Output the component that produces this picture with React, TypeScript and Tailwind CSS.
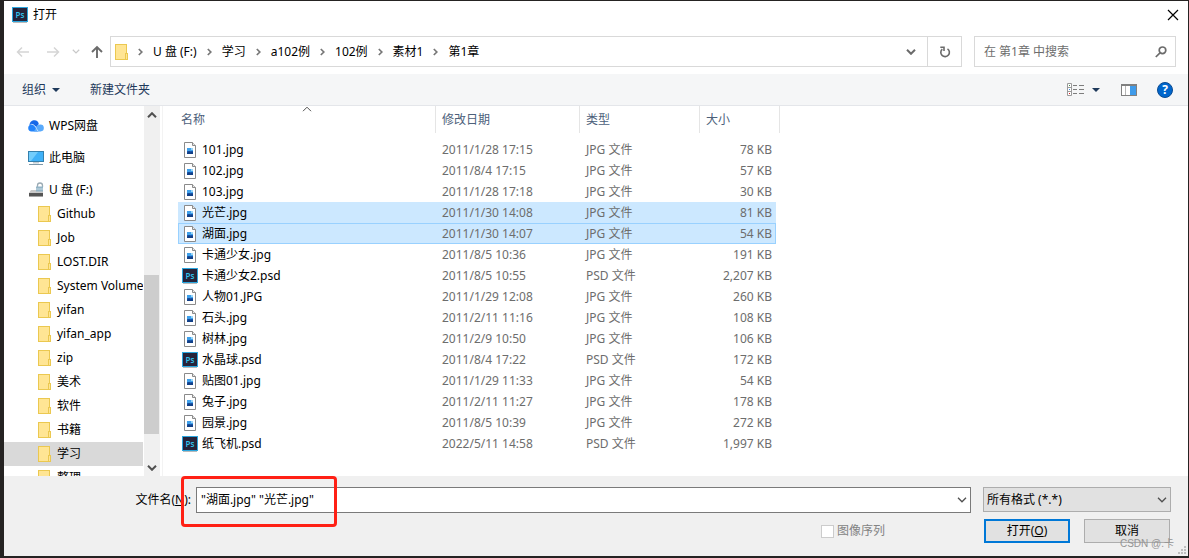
import React, { useState } from 'react';

// one row in the file list
interface FileRow {
  name: string;
  date: string;
  size: string;
}

const files: FileRow[] = [
  { name: '101.jpg', date: '2011/1/28 17:15', size: '78 KB' },
  { name: '102.jpg', date: '2011/8/4 17:15', size: '57 KB' },
  { name: '103.jpg', date: '2011/1/28 17:18', size: '30 KB' },
  { name: '光芒.jpg', date: '2011/1/30 14:08', size: '81 KB' },
  { name: '湖面.jpg', date: '2011/1/30 14:07', size: '54 KB' },
  { name: '卡通少女.jpg', date: '2011/8/5 10:36', size: '191 KB' },
  { name: '卡通少女2.psd', date: '2011/8/5 10:55', size: '2,207 KB' },
  { name: '人物01.JPG', date: '2011/1/29 12:08', size: '260 KB' },
  { name: '石头.jpg', date: '2011/2/11 11:16', size: '108 KB' },
  { name: '树林.jpg', date: '2011/2/9 10:50', size: '106 KB' },
  { name: '水晶球.psd', date: '2011/8/4 17:22', size: '172 KB' },
  { name: '贴图01.jpg', date: '2011/1/29 11:33', size: '54 KB' },
  { name: '兔子.jpg', date: '2011/2/11 11:27', size: '178 KB' },
  { name: '园景.jpg', date: '2011/8/5 10:39', size: '272 KB' },
  { name: '纸飞机.psd', date: '2022/5/11 14:58', size: '1,997 KB' },
];

const crumbs = ['U 盘 (F:)', '学习', 'a102例', '102例', '素材1', '第1章'];

const folders = ['Github', 'Job', 'LOST.DIR', 'System Volume Information', 'yifan', 'yifan_app', 'zip', '美术', '软件', '书籍', '学习', '整理'];

// ---- icons ----

const PsIcon = () => (
  <svg className="h-4 w-4 shrink-0" viewBox="0 0 16 16" aria-hidden="true">
    <rect x="1" y="15" width="14" height="1" fill="#b9b9b9" />
    <rect x="0.5" y="0.5" width="15" height="14" fill="#26233a" stroke="#2ba6de" />
    <text x="8" y="10.5" textAnchor="middle" fontSize="8" fontWeight="600" fontFamily="Open Sans, sans-serif" fill="#31c5f0">Ps</text>
  </svg>
);

const JpgIcon = () => (
  <svg className="h-4 w-4 shrink-0" viewBox="0 0 16 16" aria-hidden="true">
    <path d="M2.5 .5h8l3 3v12h-11z" fill="#fff" stroke="#8a8a8a" />
    <path d="M10.5 .5v3h3" fill="#e8e8e8" stroke="#8a8a8a" />
    <rect x="5" y="6" width="6" height="3" fill="#3fa0ea" />
    <rect x="5" y="9" width="6" height="3" fill="#1c5bb0" />
    <path d="M5 11l2-2 1.500 1.500L10 9.500l1 1V12H5z" fill="#123f86" />
    <rect x="9" y="6" width="2" height="2" fill="#9bd6f7" />
  </svg>
);

const FolderIcon = () => (
  <svg className="h-4 w-[13px] shrink-0" viewBox="0 0 13 16" aria-hidden="true">
    <rect x="0.5" y="0.5" width="11" height="15" fill="#ffe594" stroke="#ebc850" />
    <rect x="10.5" y="9.5" width="2" height="6" fill="#ffe594" stroke="#ebc850" />
  </svg>
);

const CloudIcon = () => (
  <svg className="h-4 w-4 shrink-0" viewBox="0 0 16 16" aria-hidden="true">
    <path d="M1.500 7.500C1.500 4 4 2.300 6.500 2.300c2.300 0 4 1.500 4.300 3.700L8.500 9 5 6.500z" fill="#1668e8" />
    <path d="M3.600 13.500A3.500 3.500 0 0 1 .2 10C.2 7.800 2 6.300 4 6.500c3 .3 4 3 6.500 7z" fill="#2383fa" />
    <path d="M5.500 13.500C7.500 12.500 8 6.800 12.200 6.500a3.500 3.500 0 0 1 .3 7z" fill="#5aaafb" />
    <path d="M2.500 6.400c4-.6 5 2.600 7.500 6.800" fill="none" stroke="#e6f2ff" strokeWidth=".7" />
  </svg>
);

const PcIcon = () => (
  <svg className="h-4 w-4 shrink-0" viewBox="0 0 16 16" aria-hidden="true">
    <rect x="0.5" y="1.500" width="15" height="10" fill="#3fb1f8" stroke="#3480ad" />
    <path d="M1 2h9L3 11H1z" fill="#72cdfc" />
    <rect x="5" y="12" width="6" height="1.500" fill="#c3cdd4" />
    <rect x="1" y="14" width="14" height="1" fill="#7d97a8" />
  </svg>
);

const UsbIcon = () => (
  <svg className="h-4 w-4 shrink-0" viewBox="0 0 16 16" aria-hidden="true">
    <path d="M3 8h12v3H1z" fill="#c9c9c9" />
    <rect x="1" y="11" width="14" height="4" fill="#555" />
    <rect x="1" y="14" width="14" height="1" fill="#a5a5a5" />
    <path d="M9.500 5V3.500a2.500 2.500 0 0 1 5 0V5" fill="none" stroke="#9babb4" strokeWidth="1.300" />
    <rect x="8" y="4.500" width="7" height="5" fill="#93b4c6" />
    <path d="M8 7h7" stroke="#c9dce6" />
  </svg>
);

// small "v", reused everywhere and rotated when it needs to point elsewhere
const Chevron: React.FC<{ className?: string }> = ({ className }) => (
  <svg className={className} viewBox="0 0 10 6" fill="none" stroke="currentColor" aria-hidden="true">
    <path d="M1 .8l4 4 4-4" />
  </svg>
);

const Triangle = () => (
  <svg className="h-1 w-2" viewBox="0 0 8 4" fill="#1e395b" aria-hidden="true"><path d="M0 0h8L4 4z" /></svg>
);

const CrumbArrow = () => (
  <svg className="h-2 w-[5px] shrink-0" viewBox="0 0 5 8" fill="none" stroke="#777" strokeWidth="1.700" aria-hidden="true">
    <path d="M.8 1l3 3-3 3" />
  </svg>
);

const SideItem: React.FC<{ icon: React.ReactNode; label: string; child?: boolean; active?: boolean }> = ({ icon, label, child, active }) => (
  <a
    href="#"
    className={`flex h-6 shrink-0 items-center whitespace-nowrap ${
      child ? 'gap-1.5 pl-[34px]' : 'mb-2 gap-[5px] pl-6 last:mb-0'
    } ${active ? 'bg-[#d9d9d9]' : ''}`}
  >
    {icon}
    {label}
  </a>
);

const App: React.FC = () => {
  const [fileName, setFileName] = useState('"湖面.jpg" "光芒.jpg"');
  const [selected, setSelected] = useState(['光芒.jpg', '湖面.jpg']);
  const [focused, setFocused] = useState('湖面.jpg');

  // clicking a row picks just that file
  const pick = (name: string) => {
    setSelected([name]);
    setFocused(name);
    setFileName(name);
  };

  return (
    <div className="flex h-screen min-h-[520px] flex-col bg-[#252322] pt-px pr-px pb-0.5 pl-1 font-['Noto_Sans','Noto_Sans_CJK_SC',sans-serif] text-xs text-black">
      <div className="flex min-h-0 flex-1 flex-col bg-white">
        {/* title bar */}
        <header className="flex h-7 shrink-0 items-center gap-[5px] pr-2 pl-2">
          <PsIcon />
          <h1>打开</h1>
          <button type="button" aria-label="关闭" className="ml-auto p-px">
            <svg className="h-3 w-3" viewBox="0 0 12 12" stroke="#000" strokeWidth="1.200" aria-hidden="true"><path d="M1 1l10 10M11 1L1 11" /></svg>
          </button>
        </header>

        {/* navigation + address + search */}
        <div className="flex shrink-0 items-center px-3 py-[7px]">
          <div className="flex w-[94px] shrink-0 items-center">
            <button type="button" aria-label="后退" className="mr-4 text-[#d5d5d5]">
              <svg className="h-3.5 w-3.5" viewBox="0 0 14 14" fill="none" stroke="currentColor" strokeWidth="1.500"><path d="M13 7H2M6 2.500L1.500 7 6 11.500" /></svg>
            </button>
            <button type="button" aria-label="前进" className="mr-3 text-[#d5d5d5]">
              <svg className="h-3.5 w-3.5" viewBox="0 0 14 14" fill="none" stroke="currentColor" strokeWidth="1.500"><path d="M1 7h11M8 2.500L12.500 7 8 11.500" /></svg>
            </button>
            <button type="button" aria-label="最近浏览的位置" className="mr-2.5 text-[#c8c8c8]">
              <Chevron className="h-[5px] w-2 stroke-[1.5]" />
            </button>
            <button type="button" aria-label="上移" className="text-[#6b6b6b]">
              <svg className="h-3.5 w-3.5" viewBox="0 0 14 14" fill="none" stroke="currentColor" strokeWidth="1.900"><path d="M7 13V2M2 7l5-5 5 5" /></svg>
            </button>
          </div>
          <div className="flex h-[31px] min-w-0 flex-1 border border-[#d9d9d9]">
            <div className="flex min-w-0 flex-1 items-center gap-[10px] overflow-hidden pl-1 whitespace-nowrap">
              <FolderIcon />
              {crumbs.map(crumb => (
                <React.Fragment key={crumb}>
                  <CrumbArrow />
                  <a href="#">{crumb}</a>
                </React.Fragment>
              ))}
            </div>
            <button type="button" aria-label="以前的位置" className="px-[11px] text-[#6b6b6b]">
              <Chevron className="h-1.5 w-[10px] stroke-2" />
            </button>
            <button type="button" aria-label="刷新" className="flex w-[34px] items-center justify-center border-l border-[#d9d9d9]">
              <svg className="h-3 w-3" viewBox="0 0 12 12" fill="none" stroke="#6b6b6b" strokeWidth="1.600"><path d="M8.500 2.800A4.300 4.300 0 1 1 3.300 3.100M1.300 1.300H5v3.700" /></svg>
            </button>
          </div>
          <div className="ml-3 flex h-[31px] w-[202px] shrink-0 items-center border border-[#d9d9d9] pr-2 pl-[9px]">
            <input type="search" aria-label="搜索" placeholder="在 第1章 中搜索" className="min-w-0 flex-1 outline-none placeholder:text-[#6d6d6d]" />
            <svg className="h-3 w-3" viewBox="0 0 12 12" fill="none" stroke="#6b6b6b" strokeWidth="1.700" aria-hidden="true"><circle cx="7.500" cy="4.300" r="3.300" /><path d="M5 6.800L.8 11" /></svg>
          </div>
        </div>

        {/* command bar */}
        <div className="flex h-8 shrink-0 items-center border-b border-[#e4e6ea] bg-[#f5f6f7] pr-[15px] pl-[18px] text-[#1e395b]">
          <button type="button" className="mr-[30px] flex items-center gap-1.5">组织 <Triangle /></button>
          <button type="button">新建文件夹</button>
          <button type="button" aria-label="更改视图" className="ml-auto">
            <svg className="h-[14px] w-[17px]" viewBox="0 0 17 14" fill="none">
              <path d="M.5 .5h4v12h-4zM.5 4.500h4M.5 8.500h4" fill="#fff" stroke="#9a9a9a" />
              <path d="M6 2.500h4m2 0h5M6 6.500h4m2 0h5M6 10.500h4m2 0h5" stroke="#7d7d7d" />
              <path d="M2 2.500h1" stroke="#4b8c4b" />
              <path d="M2 6.500h1" stroke="#3d8be0" />
              <path d="M2 10.500h1" stroke="#e02020" />
            </svg>
          </button>
          <button type="button" aria-label="更多选项" className="mr-[21px] ml-2"><Triangle /></button>
          <button type="button" aria-label="预览窗格" className="mr-5">
            <svg className="h-3 w-4" viewBox="0 0 16 12">
              <rect x=".5" y=".5" width="15" height="11" fill="#fff" stroke="#808080" />
              <path d="M1 1.500h14" stroke="#808080" />
              <path d="M4.500 2v9" stroke="#b5b5b5" />
              <rect x="9" y="2" width="6" height="9" fill="#3f9bea" />
            </svg>
          </button>
          <button type="button" aria-label="帮助">
            <svg className="h-4 w-4" viewBox="0 0 16 16">
              <circle cx="8" cy="8" r="7.500" fill="#0066cc" stroke="#0a4a91" />
              <text x="8" y="12.200" textAnchor="middle" fontSize="12" fontWeight="700" fontFamily="Open Sans, sans-serif" fill="#fff">?</text>
            </svg>
          </button>
        </div>

        <div className="flex min-h-0 flex-1">
          {/* folder tree */}
          <nav className="flex w-[139px] shrink-0 flex-col overflow-hidden pt-2">
            <SideItem icon={<CloudIcon />} label="WPS网盘" />
            <SideItem icon={<PcIcon />} label="此电脑" />
            {/* the drive sits right on top of its folders */}
            <div className="shrink-0">
              <SideItem icon={<UsbIcon />} label="U 盘 (F:)" />
            </div>
            {folders.map(folder => (
              <SideItem key={folder} icon={<FolderIcon />} label={folder} child active={folder === '学习'} />
            ))}
          </nav>

          {/* tree scrollbar */}
          <div className="ml-px flex w-4 shrink-0 flex-col bg-[#f0f0f0] text-[#505050]">
            <button type="button" aria-label="向上滚动" className="flex h-[17px] items-center justify-center">
              <Chevron className="h-1.5 w-[10px] rotate-180 stroke-2" />
            </button>
            <div className="grow-[152]" />
            <div className="mr-px grow-[159] bg-[#cdcdcd]" />
            <div className="grow-[25]" />
            <button type="button" aria-label="向下滚动" className="flex h-[17px] items-center justify-center">
              <Chevron className="h-1.5 w-[10px] stroke-2" />
            </button>
          </div>

          {/* file list */}
          <main className="ml-0.5 min-w-0 flex-1 overflow-hidden border-l border-[#f3f3f3] pl-[15px]">
            <table className="w-[602px] table-fixed border-separate border-spacing-0 text-left whitespace-nowrap">
              <colgroup>
                <col className="w-[258px]" />
                <col className="w-36" />
                <col className="w-[120px]" />
                <col className="w-[76px]" />
                <col className="w-1" />
              </colgroup>
              <thead className="text-[#4c607a]">
                <tr>
                  <th className="relative p-0 pb-1.5 font-normal">
                    <Chevron className="absolute top-0 left-1/2 h-1.5 w-[10px] -translate-x-1/2 rotate-180 text-[#505050]" />
                    <div className="flex h-[27px] items-center border-r border-[#e5e5e5] pl-[3px]">名称</div>
                  </th>
                  <th className="p-0 pb-1.5 font-normal">
                    <div className="flex h-[27px] items-center border-r border-[#e5e5e5] pl-1.5">修改日期</div>
                  </th>
                  <th className="p-0 pb-1.5 font-normal">
                    <div className="flex h-[27px] items-center border-r border-[#e5e5e5] pl-1.5">类型</div>
                  </th>
                  <th colSpan={2} className="p-0 pb-1.5 font-normal">
                    <div className="flex h-[27px] items-center border-r border-[#e5e5e5] pl-1.5">大小</div>
                  </th>
                </tr>
              </thead>
              <tbody className="text-[#6d6d6d]">
                {files.map(file => {
                  const isPsd = file.name.endsWith('.psd');
                  const isFocused = file.name === focused;
                  const cell = `border-y p-0 ${selected.includes(file.name) ? 'bg-[#cce8ff]' : ''} ${isFocused ? 'border-[#99d1ff]' : 'border-transparent'}`;
                  return (
                    <tr key={file.name} onClick={() => pick(file.name)} className="h-[21px] leading-[19px]">
                      <td className={`${cell} border-l`}>
                        <div className="flex items-center gap-1 pl-[3px] text-black">
                          {isPsd ? <PsIcon /> : <JpgIcon />}
                          {file.name}
                        </div>
                      </td>
                      <td className={`${cell} pl-1.5`}>{file.date}</td>
                      <td className={`${cell} pl-1.5`}>{isPsd ? 'PSD' : 'JPG'} 文件</td>
                      <td className={`${cell} border-r pr-[3px] text-right`}>{file.size}</td>
                      <td className="p-0" />
                    </tr>
                  );
                })}
              </tbody>
            </table>
          </main>
        </div>

        {/* bottom part: file name, format and the buttons */}
        <footer className="relative flex h-20 shrink-0 flex-col gap-1.5 bg-[#f0f0f0] pt-[11px]">
          <div className="flex items-start pr-[17px]">
            <label htmlFor="file-name" className="mr-[5px] w-[187px] shrink-0 text-right leading-[26px]">
              文件名(<u>N</u>):
            </label>
            <div className="flex h-[26px] min-w-0 flex-1 border border-[#7a7a7a] bg-white">
              <input
                id="file-name"
                type="text"
                value={fileName}
                onChange={e => setFileName(e.target.value)}
                className="min-w-0 flex-1 pl-1 outline-none"
              />
              <button type="button" aria-label="文件名记录" className="px-[3px] text-[#505050]">
                <Chevron className="h-1.5 w-[10px] stroke-[1.3]" />
              </button>
            </div>
            <div className="relative ml-3 w-[188px] shrink-0 text-[#505050]">
              <select aria-label="文件格式" className="h-[25px] w-full appearance-none border border-[#adadad] bg-[#e1e1e1] pl-[3px] text-black">
                <option>所有格式 (*.*)</option>
              </select>
              <Chevron className="pointer-events-none absolute top-[10px] right-1 h-1.5 w-[10px] stroke-[1.3]" />
            </div>
          </div>
          <div className="flex items-center justify-end pr-[18px]">
            <label className="mr-[99px] flex items-center gap-[3px] text-[#838383]">
              <input type="checkbox" disabled className="h-[13px] w-[13px] appearance-none border border-[#cccccc] bg-white" />
              图像序列
            </label>
            <button type="button" className="mr-3.5 h-6 w-[86px] border-2 border-[#0078d7] bg-[#e1e1e1] leading-5">
              打开(<u>O</u>)
            </button>
            <button type="button" className="h-6 w-[86px] border border-[#adadad] bg-[#e1e1e1] leading-[22px]">取消</button>
          </div>

          {/* red marker round the file name */}
          <div className="pointer-events-none absolute top-0 left-[177px] h-[51px] w-[156px] rounded-sm border-3 border-[#ff2015]" />
          {/* watermark */}
          <span className="pointer-events-none absolute right-3.5 bottom-1.5 font-['Liberation_Sans','Noto_Sans_CJK_SC',sans-serif] text-[10px] leading-3 text-[#949494]">CSDN @.卡</span>
          {/* resize grip */}
          <svg className="absolute right-0.5 bottom-0.5 h-2 w-2" viewBox="0 0 8 8" fill="#bfbfbf" aria-hidden="true">
            <path d="M6 0h2v2H6zM3 3h2v2H3zM6 3h2v2H6zM0 6h2v2H0zM3 6h2v2H3zM6 6h2v2H6z" />
          </svg>
        </footer>
      </div>
    </div>
  );
};

export default App;
